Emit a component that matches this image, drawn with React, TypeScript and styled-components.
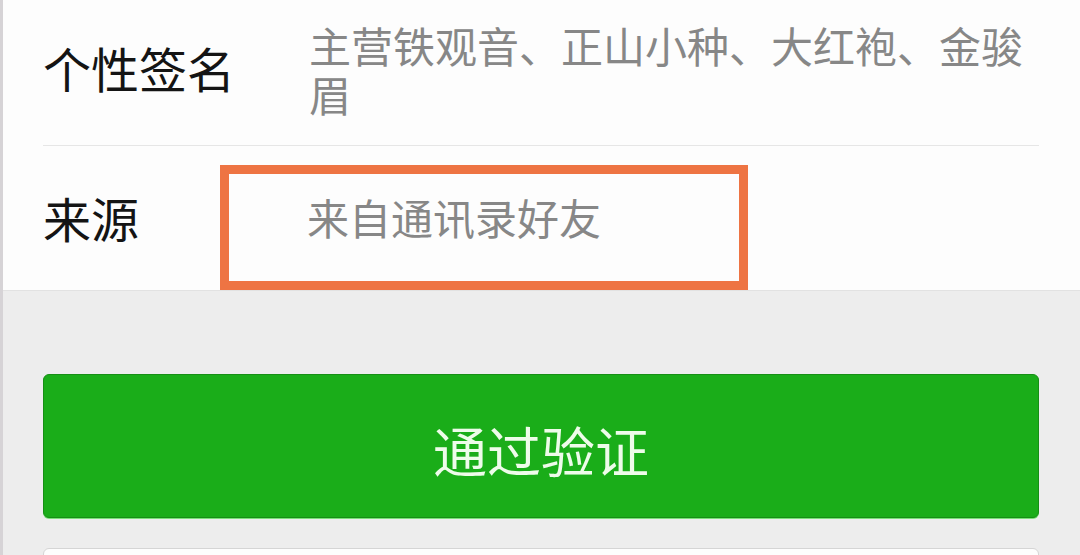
import React from "react";
import styled, { createGlobalStyle } from "styled-components";

const GlobalStyle = createGlobalStyle`
  html, body {
    margin: 0;
    padding: 0;
    background: #ededed;
  }
  body {
    font-family: "Noto Sans CJK SC", "Noto Sans", sans-serif;
  }
`;

const Screen = styled.div`
  width: 1080px;
  height: 555px;
  box-sizing: border-box;
  overflow: hidden;
  background: #ededed;
  border-left: 3px solid #d6d3d6;
`;

const Panel = styled.section`
  background: #fdfdfd;
  padding: 0 41px 0 40px;
  border-bottom: 1px solid #e2e2e2;
`;

const Row = styled.div<{ $divider?: boolean }>`
  display: flex;
  align-items: flex-start;
  box-sizing: border-box;
  height: ${(p) => (p.$divider ? "146px" : "144px")};
  padding-top: ${(p) => (p.$divider ? "20px" : "19px")};
  border-bottom: ${(p) => (p.$divider ? "1px solid #e6e6e6" : "none")};
`;

const Label = styled.div<{ $width: number; $top: number }>`
  flex: 0 0 ${(p) => p.$width}px;
  margin-top: ${(p) => p.$top}px;
  font-size: 48px;
  line-height: 56px;
  color: #141414;
  white-space: nowrap;
`;

const Value = styled.div`
  flex: 1;
  font-size: 42px;
  line-height: 49px;
  color: #878787;
`;

const Highlight = styled.div`
  width: 528px;
  height: 125px;
  box-sizing: border-box;
  border: 9px solid #ee7443;
  padding: 18px 0 0 78px;
  font-size: 42px;
  line-height: 50px;
  color: #878787;
  white-space: nowrap;
`;

const Actions = styled.div`
  display: flex;
  flex-direction: column;
  gap: 30px;
  padding: 83px 41px 0 40px;
`;

const PrimaryButton = styled.button`
  height: 144px;
  width: 100%;
  border: 1px solid #168f15;
  border-radius: 6px;
  background: #1aad19;
  color: #eefcea;
  font-family: "Noto Sans CJK SC", "Noto Sans", sans-serif;
  font-size: 54px;
  padding: 6px 0 0;
  cursor: pointer;
  box-shadow: 0 1px 0 #7be07a;
`;

const SecondaryButton = styled.button`
  height: 80px;
  width: 100%;
  border: 1px solid #d5d5d5;
  border-radius: 6px;
  background: #fdfdfd;
`;

export default function App() {
  return (
    <>
      <GlobalStyle />
      <Screen>
        <Panel>
          <Row $divider>
            <Label $width={266} $top={19}>
              个性签名
            </Label>
            <Value>主营铁观音、正山小种、大红袍、金骏眉</Value>
          </Row>
          <Row>
            <Label $width={177} $top={24}>
              来源
            </Label>
            <Highlight>来自通讯录好友</Highlight>
          </Row>
        </Panel>
        <Actions>
          <PrimaryButton>通过验证</PrimaryButton>
          <SecondaryButton />
        </Actions>
      </Screen>
    </>
  );
}
